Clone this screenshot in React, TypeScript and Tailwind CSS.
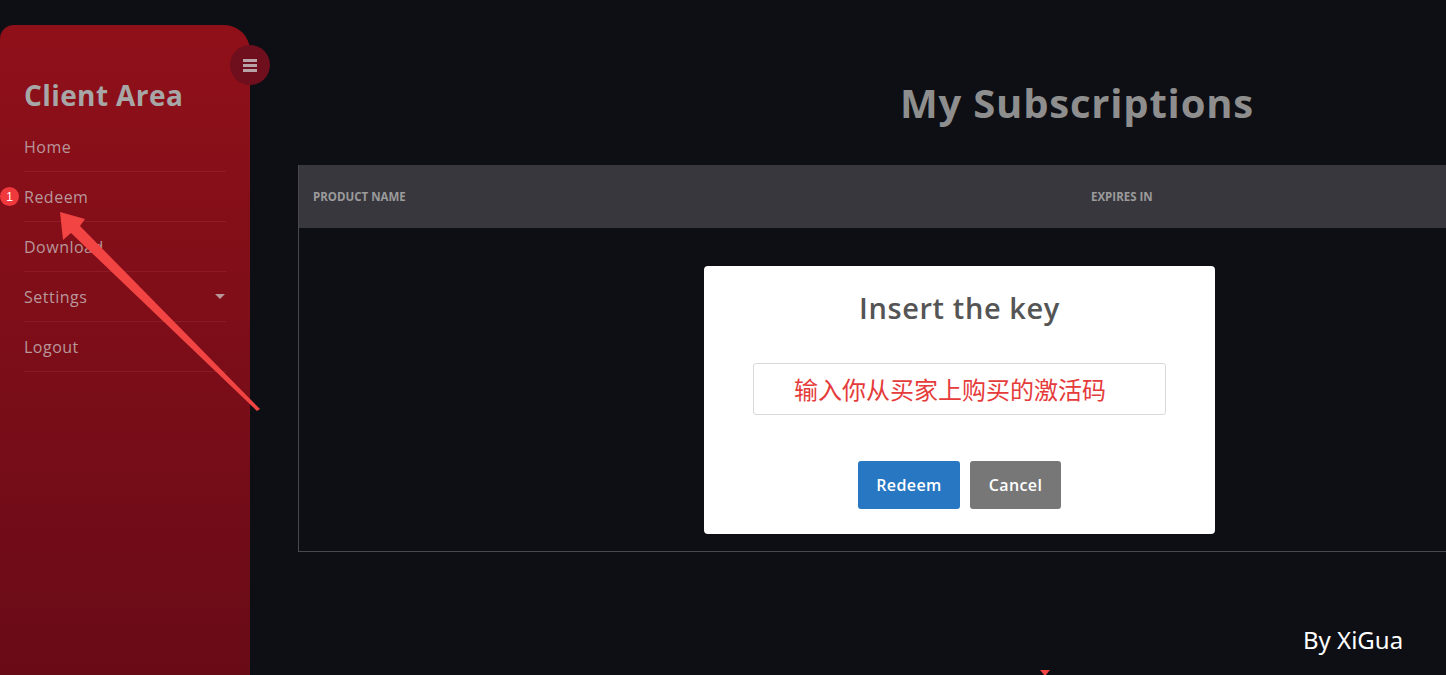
import React from 'react';

const navItems = ['Home', 'Redeem', 'Download', 'Settings', 'Logout'];

const Sidebar: React.FC = () => {
  return (
    <aside className="relative mt-[25px] w-[250px] shrink-0 min-h-[650px] rounded-tr-[26px] rounded-tl-[14px] bg-gradient-to-b from-[#901019] to-[#690b17] pt-[52px]">
      {/* toggle button sits over the sidebar edge */}
      <button className="absolute right-[-20px] top-[20px] flex h-[40px] w-[40px] items-center justify-center rounded-full bg-[#6f0e1d]">
        <span className="flex flex-col gap-[2px]">
          <span className="block h-[3px] w-[14px] bg-[#b7a3a8]"></span>
          <span className="block h-[3px] w-[14px] bg-[#b7a3a8]"></span>
          <span className="block h-[3px] w-[14px] bg-[#b7a3a8]"></span>
        </span>
      </button>
      <h1 className="px-[24px] text-[28px] leading-[36px] font-bold tracking-[0.4px] text-[#a7a7a7] [font-family:'Open_Sans',sans-serif]">
        Client Area
      </h1>
      <nav className="mx-[24px] mt-[9px]">
        {navItems.map(item => (
          <div key={item} className="relative flex h-[50px] items-center border-b border-[#a0303a]/40 text-[16px] tracking-[0.5px] text-[#b8979b] [font-family:'Open_Sans',sans-serif]">
            {item === 'Redeem' && (
              <span className="absolute left-[-24px] top-[15px] flex h-[19px] w-[19px] items-center justify-center rounded-full bg-[#f0393c] text-[12px] tracking-normal text-white [font-family:'Liberation_Sans',sans-serif]">
                1
              </span>
            )}
            <span>{item}</span>
            {item === 'Settings' && (
              <span className="ml-auto mr-[1px] h-0 w-0 border-x-[5px] border-t-[5px] border-x-transparent border-t-[#b8979b]"></span>
            )}
          </div>
        ))}
      </nav>
    </aside>
  );
};

const RedeemModal: React.FC = () => {
  return (
    <div className="absolute left-[704px] top-[266px] w-[511px] rounded-[4px] bg-white px-[49px] pt-[24px] pb-[25px] [font-family:'Open_Sans',sans-serif]">
      <h2 className="text-center text-[29px] leading-[36px] font-semibold tracking-[0.6px] text-[#555555]">Insert the key</h2>
      <div className="mt-[37px] flex h-[52px] items-center rounded-[3px] border border-[#d9d9d9] pl-[40px]">
        <span className="text-[24px] text-[#e53b3b] [font-family:'Noto_Sans_CJK_SC',sans-serif]">输入你从买家上购买的激活码</span>
      </div>
      <div className="mt-[46px] flex justify-center gap-[10px]">
        <button className="h-[48px] w-[102px] rounded-[3px] bg-[#2777c3] text-[16px] font-semibold tracking-[0.4px] text-white">Redeem</button>
        <button className="h-[48px] w-[91px] rounded-[3px] bg-[#777777] text-[16px] font-semibold tracking-[0.4px] text-white">Cancel</button>
      </div>
    </div>
  );
};

export default function App() {
  return (
    <div className="relative flex h-[675px] w-full overflow-hidden bg-[#0e0f14]">
      <Sidebar />
      <main className="min-w-0 flex-1 pl-[48px] pt-[78px]">
        <div className="w-[1558px]">
          <h1 className="text-center text-[40px] leading-[50px] font-bold tracking-[0.8px] text-[#8e8e8e] [font-family:'Open_Sans',sans-serif]">
            My Subscriptions
          </h1>
          <div className="mt-[37px] border-b border-l border-[#48484e]">
            <div className="grid h-[63px] grid-cols-[778px_1fr] items-center bg-[#38373e] text-[11.5px] font-bold text-[#9b9b9b] [font-family:'Open_Sans',sans-serif]">
              <span className="pl-[14px]">PRODUCT NAME</span>
              <span className="pl-[14px]">EXPIRES IN</span>
            </div>
            <div className="h-[323px]"></div>
          </div>
        </div>
      </main>

      <RedeemModal />

      {/* annotation arrow drawn over the page */}
      <svg className="pointer-events-none absolute left-0 top-0" width="1446" height="675" viewBox="0 0 1446 675">
        <polygon
          fill="#f24443"
          points="60,212 63,240 71,233 257,411 260,409 80,226 85,219"
        />
        <polygon fill="#f24443" points="1040,670 1050,670 1045,676" />
      </svg>

      <span className="absolute left-[1303px] top-[624px] text-[24px] leading-[32px] text-white [font-family:'Noto_Sans',sans-serif]">
        By XiGua
      </span>
    </div>
  );
}
